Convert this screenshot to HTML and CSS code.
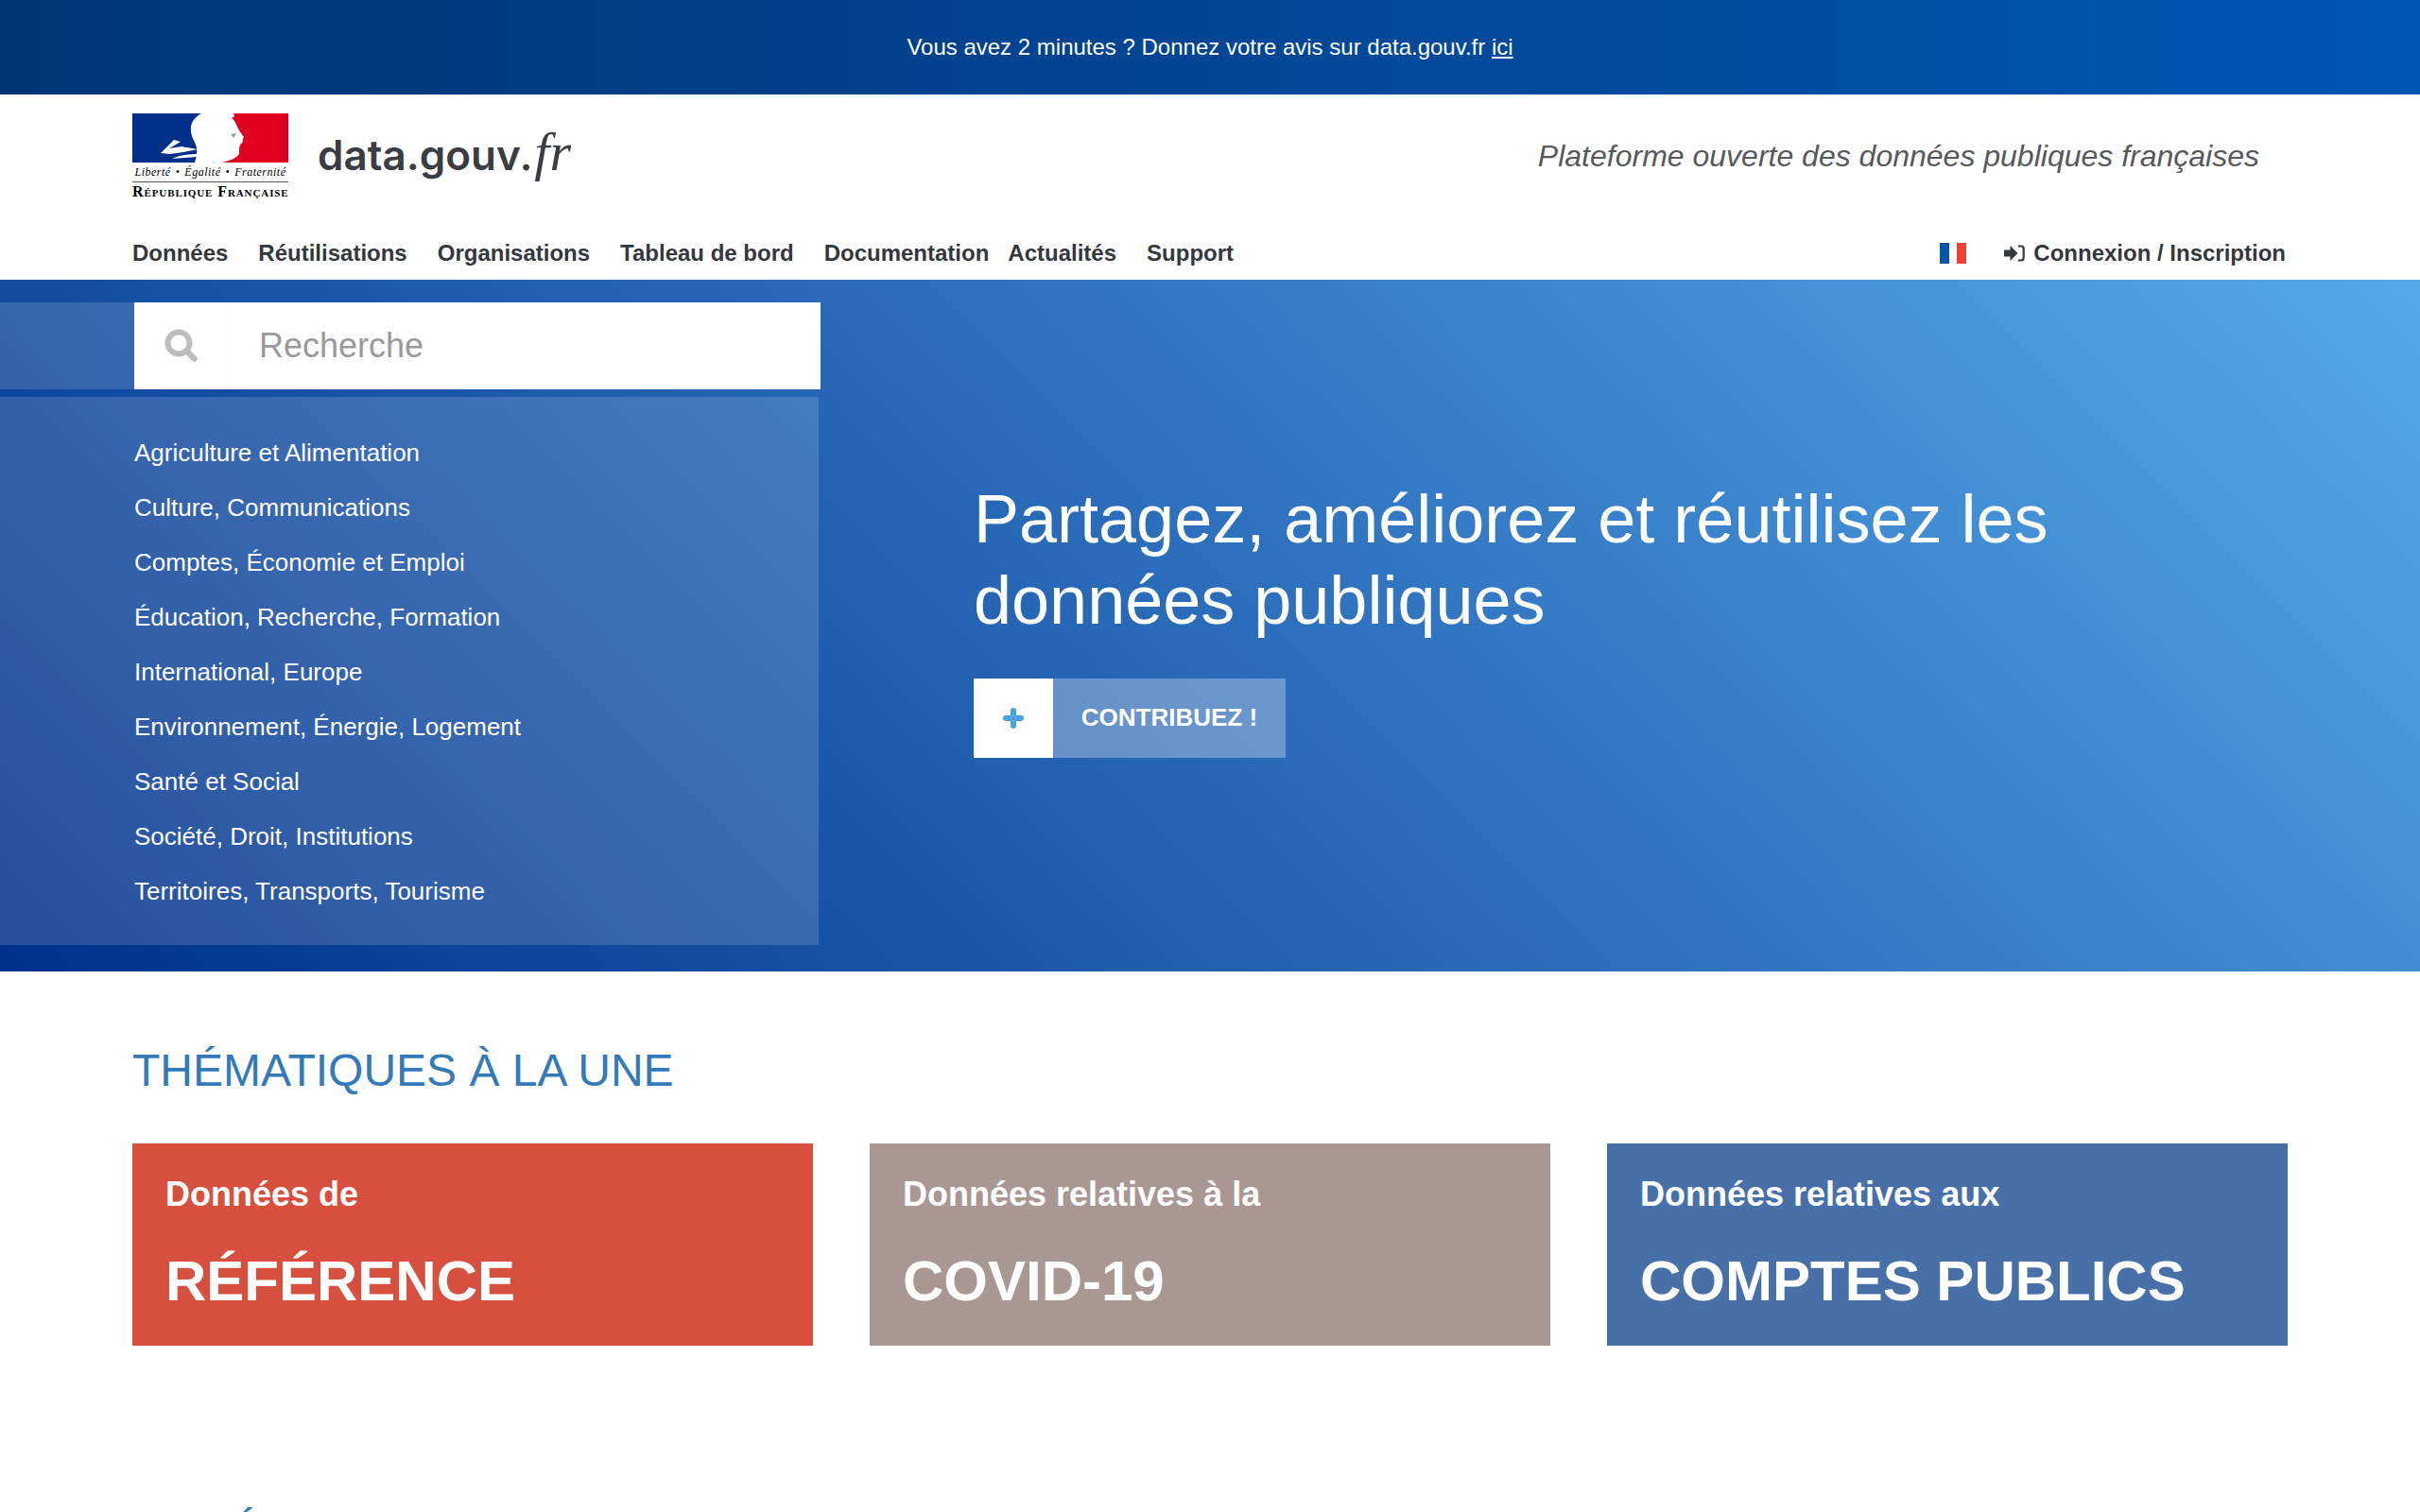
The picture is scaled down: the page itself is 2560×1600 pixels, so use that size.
FILE: index.html
```html
<!doctype html>
<html lang="fr">
<head>
<meta charset="utf-8">
<title>data.gouv.fr</title>
<link rel="stylesheet" href="styles.css">
</head>
<body>
<div class="banner">Vous avez 2 minutes ? Donnez votre avis sur data.gouv.fr <a href="#">ici</a></div>

<header class="header">
	<div class="brand">
		<a class="rf-logo" href="#">
			<svg class="rf-flag" viewBox="0 0 165 52" width="165" height="52">
				<path d="M0 0H73C66 4 61 10 62 18C62 25 66 29 68 36C69 44 67 48 66 52H0Z" fill="#00308a"/>
				<path d="M107 0H165V52H95C103 50 112 47 113 42C113 37 113 34 115 32C118 31 116 27 118 25C116 22 114 20 112 16C110 11 108 7 105 5L108 3Z" fill="#e1001f"/>
				<path d="M30 42L44 28L51 30L39 37L52 35L69 38L54 41L40 43ZM42 48C50 44 60 43 69 43L68 46C60 47 50 47 42 48Z" fill="#fff"/>
				<path d="M104 22L110 21L107 26Z" fill="#8f9aa5"/>
			</svg>
			<span class="rf-devise">Liberté • Égalité • Fraternité</span>
			<span class="rf-name">République Française</span>
		</a>
		<a class="wordmark" href="#">data.gouv<span>.fr</span></a>
		<p class="tagline">Plateforme ouverte des données publiques françaises</p>
	</div>
	<nav class="nav">
		<a href="#">Données</a>
		<a href="#">Réutilisations</a>
		<a href="#">Organisations</a>
		<a href="#">Tableau de bord</a>
		<a class="tight" href="#">Documentation</a>
		<a href="#">Actualités</a>
		<a href="#">Support</a>
		<span class="flag"><i class="blue"></i><i class="red"></i></span>
		<a class="login" href="#">
			<svg viewBox="0 0 22 18" width="22" height="18"><path d="M0 5.5H6.5V1L14.5 9L6.5 17V12.5H0Z" fill="#34373c"/><path d="M15 1.5H18C19.6 1.5 20.7 2.4 20.7 4V14C20.7 15.6 19.6 16.5 18 16.5H15" fill="none" stroke="#34373c" stroke-width="2.2"/></svg>
			Connexion / Inscription
		</a>
	</nav>
</header>

<section class="hero">
	<div class="hero-left">
		<form class="search">
			<span class="search-icon">
				<svg viewBox="0 0 36 36" width="36" height="36"><circle cx="15" cy="15" r="11.5" fill="none" stroke="#bdbdbd" stroke-width="6"/><path d="M23.5 23.5L31.5 31.5" stroke="#bdbdbd" stroke-width="6.5" stroke-linecap="round"/></svg>
			</span>
			<span class="search-text">Recherche</span>
		</form>
		<ul class="topics">
			<li><a href="#">Agriculture et Alimentation</a></li>
			<li><a href="#">Culture, Communications</a></li>
			<li><a href="#">Comptes, Économie et Emploi</a></li>
			<li><a href="#">Éducation, Recherche, Formation</a></li>
			<li><a href="#">International, Europe</a></li>
			<li><a href="#">Environnement, Énergie, Logement</a></li>
			<li><a href="#">Santé et Social</a></li>
			<li><a href="#">Société, Droit, Institutions</a></li>
			<li><a href="#">Territoires, Transports, Tourisme</a></li>
		</ul>
	</div>
	<div class="hero-right">
		<h1>Partagez, améliorez et réutilisez les données publiques</h1>
		<a class="contrib" href="#">
			<span class="contrib-icon"><svg viewBox="0 0 22 22" width="22" height="22"><path d="M11 3V19M3 11H19" stroke="#4aa3dc" stroke-width="6" stroke-linecap="round"/></svg></span>
			<span class="contrib-label">CONTRIBUEZ !</span>
		</a>
	</div>
</section>

<section class="themes">
	<h2>THÉMATIQUES À LA UNE</h2>
	<div class="cards">
		<a class="card red" href="#"><span>Données de</span><strong>RÉFÉRENCE</strong></a>
		<a class="card taupe" href="#"><span>Données relatives à la</span><strong>COVID-19</strong></a>
		<a class="card steel" href="#"><span>Données relatives aux</span><strong>COMPTES PUBLICS</strong></a>
	</div>
	<h2 class="next">LA RÉUTILISATION</h2>
</section>
</body>
</html>
```

FILE: styles.css
```css
* {margin:0; padding:0; box-sizing:border-box; }
body {height:1600px; overflow:hidden; background:#fff; font-family:"Liberation Sans",Arial,sans-serif; color:#34373c; }
a {color:inherit; text-decoration:none; }

.banner {height:100px; line-height:100px; text-align:center; font-size:24px; color:#fff; background:linear-gradient(to right,#003575,#0056b4); }
.banner a {text-decoration:underline; }

.header {height:196px; padding:0 140px; display:flex; flex-direction:column; }
.brand {height:140px; display:flex; align-items:flex-start; padding-top:20px; }
.rf-logo {display:flex; flex-direction:column; width:165px; color:#000; }
.rf-flag {display:block; }
.rf-devise {font:italic 12px "Liberation Serif",serif; text-align:center; white-space:nowrap; padding:3px 0 2px; border-bottom:1px solid #555; word-spacing:1.5px; letter-spacing:.5px; }
.rf-name {font:bold 16px "Liberation Serif",serif; font-variant:small-caps; text-align:center; white-space:nowrap; line-height:15px; padding-top:2px; letter-spacing:.9px; }
.wordmark {margin:7px 0 0 31px; font:600 44px/60px Inter,sans-serif; color:#3a3d42; }
.wordmark span {font:italic 58px "Liberation Serif",serif; font-weight:normal; }
.tagline {margin:25px 30px 0 auto; font-size:32px; font-style:italic; color:#58595b; line-height:40px; }

.nav {display:flex; align-items:center; height:56px; padding-right:2px; font-size:24px; font-weight:bold; color:#34373c; }
.nav a {margin-right:32px; white-space:nowrap; }
.nav a.tight {margin-right:20px; }
.nav a.login {margin:0; display:flex; align-items:center; gap:9px; }
.flag {margin-left:auto; margin-right:40px; display:flex; gap:8px; }
.flag i {display:block; width:10px; height:22px; }
.flag .blue {background:#0055a4; }
.flag .red {background:#ef4135; }

.hero {height:732px; display:flex; color:#fff; background:linear-gradient(45deg,#00308a,#55a9e9); }
.hero-left {width:868px; padding-top:24px; flex:none; }
.search {height:92px; display:flex; background:linear-gradient(to right,rgba(255,255,255,.15) 142px,#fff 142px); }
.search-icon {width:100px; margin-left:142px; display:flex; align-items:center; justify-content:center; border-right:1px solid #fafafa; }
.search-text {padding-left:32px; line-height:92px; font-size:36px; color:#999; }
.topics {list-style:none; width:866px; height:580px; margin-top:8px; padding:30px 0 0 142px; background:rgba(255,255,255,.15); }
.topics li {height:58px; line-height:58px; font-size:26px; }

.hero-right {padding:210px 0 0 162px; }
.hero-right h1 {width:1200px; font-size:72px; font-weight:normal; line-height:86px; }
.contrib {display:inline-flex; height:84px; margin-top:40px; }
.contrib-icon {width:84px; display:flex; align-items:center; justify-content:center; background:#fff; }
.contrib-label {width:246px; line-height:83px; text-align:center; font-size:26px; font-weight:bold; background:rgba(255,255,255,.3); }

.themes {padding:0 140px; }
.themes h2 {margin-top:76px; font-size:48px; font-weight:normal; line-height:58px; color:#337ab7; }
.cards {display:flex; gap:60px; margin-top:48px; }
.card {flex:0 0 720px; height:214px; padding:32px 35px 0; display:flex; flex-direction:column; color:#fff; }
.card span {font-size:36px; font-weight:bold; line-height:44px; }
.card strong {margin-top:35px; font-size:60px; line-height:70px; }
.card.red {background:#d74f3e; }
.card.taupe {background:#a99794; }
.card.steel {background:#4870a8; }
.themes h2.next {margin-top:168px; }
```
